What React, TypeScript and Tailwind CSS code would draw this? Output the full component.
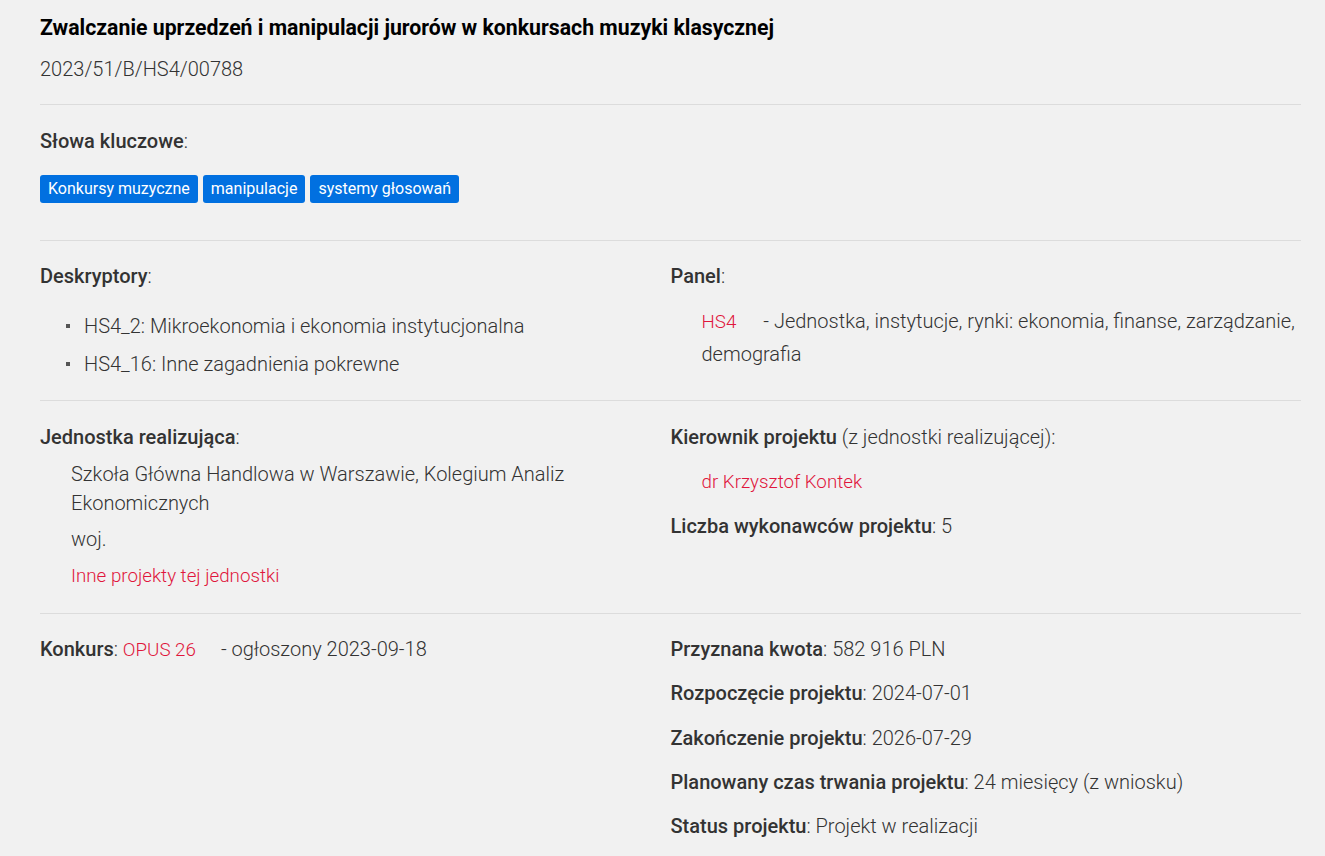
import React from "react";

const Label = ({ children }: { children: React.ReactNode }) => (
  <span className="font-medium text-[#333]">{children}</span>
);

export default function App() {
  return (
    <div
      className="min-h-[856px] bg-[#f1f1f1] text-[#333] font-light text-[20px]"
      style={{ fontFamily: "Roboto, 'Noto Sans', sans-serif" }}
    >
      <div className="pl-[40px] pr-[24px]">
        <div className="pt-[14px] pb-[21px]">
          <h1 className="text-[21.25px] font-bold text-black leading-[28px]">
            Zwalczanie uprzedzeń i manipulacji jurorów w konkursach muzyki klasycznej
          </h1>
          <p className="mt-[13px] leading-[28px]">2023/51/B/HS4/00788</p>
        </div>
        <div className="border-t border-[#dcdcdc]" />
        <div className="pt-[22px] pb-[37px]">
          <p className="leading-[28px]">
            <Label>Słowa kluczowe</Label>:
          </p>
          <div className="mt-[20px] flex gap-[5px]">
            {["Konkursy muzyczne", "manipulacje", "systemy głosowań"].map((k) => (
              <span
                key={k}
                className="bg-[#0170e0] text-white font-normal text-[16px] leading-[28px] px-[8px] rounded-[3px]"
              >
                {k}
              </span>
            ))}
          </div>
        </div>
        <div className="border-t border-[#dcdcdc]" />
        <div className="grid grid-cols-2">
          <div className="pt-[21px] pb-[22px]">
            <p className="leading-[28px]">
              <Label>Deskryptory</Label>:
            </p>
            <ul className="mt-[22px] pl-[26px] flex flex-col gap-[10px]">
              {[
                "HS4_2: Mikroekonomia i ekonomia instytucjonalna",
                "HS4_16: Inne zagadnienia pokrewne",
              ].map((d) => (
                <li key={d} className="flex items-center leading-[28px]">
                  <span className="w-[4px] h-[4px] bg-[#555] mr-[14px]" />
                  {d}
                </li>
              ))}
            </ul>
          </div>
          <div className="pt-[21px] pb-[22px]">
            <p className="leading-[28px]">
              <Label>Panel</Label>:
            </p>
            <p className="mt-[15px] pl-[31px] leading-[32px]">
              <span className="text-[#e0163c] text-[18.75px]">HS4</span>
              <span className="ml-[27px]">- Jednostka, instytucje, rynki: ekonomia, finanse, zarządzanie, demografia</span>
            </p>
          </div>
        </div>
        <div className="border-t border-[#dcdcdc]" />
        <div className="grid grid-cols-2">
          <div className="pt-[22px] pb-[22px]">
            <p className="leading-[28px]">
              <Label>Jednostka realizująca</Label>:
            </p>
            <div className="pl-[31px]">
              <p className="mt-[9px] leading-[29px]">
                Szkoła Główna Handlowa w Warszawie, Kolegium Analiz Ekonomicznych
              </p>
              <p className="mt-[7px] leading-[29px]">woj.</p>
              <p className="mt-[8px] leading-[29px] text-[#e0163c] text-[18.75px]">Inne projekty tej jednostki</p>
            </div>
          </div>
          <div className="pt-[22px] pb-[22px]">
            <p className="leading-[28px]">
              <Label>Kierownik projektu</Label> (z jednostki realizującej):
            </p>
            <p className="mt-[17px] pl-[31px] leading-[28px] text-[#e0163c] text-[18.75px]">dr Krzysztof Kontek</p>
            <p className="mt-[16px] leading-[28px]">
              <Label>Liczba wykonawców projektu</Label>: 5
            </p>
          </div>
        </div>
        <div className="border-t border-[#dcdcdc]" />
        <div className="grid grid-cols-2">
          <div className="pt-[21px]">
            <p className="leading-[28px]">
              <Label>Konkurs</Label>: <span className="text-[#e0163c] text-[18.75px]">OPUS 26</span>
              <span className="ml-[25px]">- ogłoszony 2023-09-18</span>
            </p>
          </div>
          <div className="pt-[21px] flex flex-col gap-[16.25px]">
            <p className="leading-[28px]">
              <Label>Przyznana kwota</Label>: 582 916 PLN
            </p>
            <p className="leading-[28px]">
              <Label>Rozpoczęcie projektu</Label>: 2024-07-01
            </p>
            <p className="leading-[28px]">
              <Label>Zakończenie projektu</Label>: 2026-07-29
            </p>
            <p className="leading-[28px]">
              <Label>Planowany czas trwania projektu</Label>: 24 miesięcy (z wniosku)
            </p>
            <p className="leading-[28px]">
              <Label>Status projektu</Label>: Projekt w realizacji
            </p>
          </div>
        </div>
      </div>
    </div>
  );
}
